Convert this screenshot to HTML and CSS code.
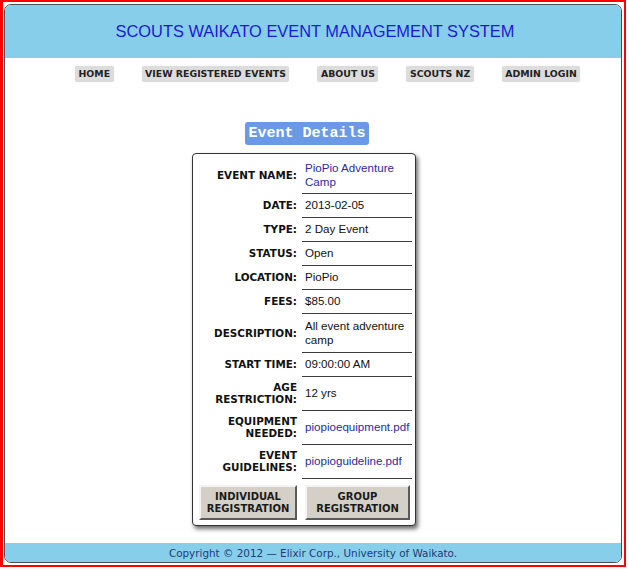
FILE: index.html
```html
<!DOCTYPE html>
<html lang="en">
<head>
<meta charset="utf-8">
<title>Scouts Waikato Event Management System</title>
<link rel="stylesheet" href="styles.css">
</head>
<body>
<div class="frame">
  <div class="site">
    <header class="header">
      <h1 class="title">SCOUTS WAIKATO EVENT MANAGEMENT SYSTEM</h1>
    </header>
    <nav class="nav">
      <a class="nav-btn" href="#">HOME</a>
      <a class="nav-btn" href="#">VIEW REGISTERED EVENTS</a>
      <a class="nav-btn" href="#">ABOUT US</a>
      <a class="nav-btn" href="#">SCOUTS NZ</a>
      <a class="nav-btn" href="#">ADMIN LOGIN</a>
    </nav>
    <main class="main">
      <div class="badge">Event Details</div>
      <div class="card">
        <table class="details">
          <tr><th>EVENT NAME:</th><td class="link">PioPio Adventure Camp</td></tr>
          <tr><th>DATE:</th><td>2013-02-05</td></tr>
          <tr><th>TYPE:</th><td>2 Day Event</td></tr>
          <tr><th>STATUS:</th><td>Open</td></tr>
          <tr><th>LOCATION:</th><td>PioPio</td></tr>
          <tr><th>FEES:</th><td>$85.00</td></tr>
          <tr class="tall"><th>DESCRIPTION:</th><td>All event adventure camp</td></tr>
          <tr><th>START TIME:</th><td>09:00:00 AM</td></tr>
          <tr><th>AGE<br>RESTRICTION:</th><td>12 yrs</td></tr>
          <tr><th>EQUIPMENT<br>NEEDED:</th><td class="link">piopioequipment.pdf</td></tr>
          <tr><th>EVENT<br>GUIDELINES:</th><td class="link">piopioguideline.pdf</td></tr>
        </table>
        <div class="actions">
          <button class="reg-btn reg-individual">INDIVIDUAL<br>REGISTRATION</button>
          <button class="reg-btn reg-group">GROUP<br>REGISTRATION</button>
        </div>
      </div>
    </main>
    <footer class="footer">Copyright © 2012 — Elixir Corp., University of Waikato.</footer>
  </div>
</div>
</body>
</html>
```

FILE: styles.css
```css
html, body {
  margin: 0;
  padding: 0;
  background: #fff;
}

.frame {
  box-sizing: border-box;
  width: 626px;
  height: 567px;
  border: 2px solid #f00;
  border-left-width: 3px;
  padding: 2px 2px 2px 1px;
}

.site {
  box-sizing: border-box;
  height: 100%;
  border: 1px solid #4a4f55;
  border-radius: 7px;
  overflow: hidden;
  display: flex;
  flex-direction: column;
  background: #fff;
}

.header {
  height: 53px;
  background: #87ceeb;
  display: flex;
  align-items: center;
  justify-content: center;
}

.title {
  margin: 0 0 0 4px;
  font-family: "Liberation Sans", Arial, sans-serif;
  font-weight: normal;
  font-size: 16.4px;
  color: #1b1bcc;
}

.nav {
  display: flex;
  gap: 28px;
  padding-left: 70px;
  margin-top: 8px;
}

.nav-btn {
  display: block;
  background: #dcdcdc;
  border-radius: 3px;
  padding: 2px 3.5px;
  font-family: "DejaVu Sans", Verdana, sans-serif;
  font-weight: bold;
  font-size: 9.4px;
  line-height: 12px;
  color: #222;
  text-decoration: none;
  box-shadow: 0 0 1px #cfcfcf;
}

.main {
  flex: 1;
  display: flex;
  flex-direction: column;
  align-items: center;
  padding-right: 16px;
  padding-top: 40px;
}

.badge {
  margin-left: 4px;
  background: #6a9ae6;
  color: #fff;
  font-family: "Liberation Mono", "Courier New", monospace;
  font-weight: bold;
  font-size: 15px;
  line-height: 23px;
  padding: 0 3px;
  border-radius: 3px;
}

.card {
  box-sizing: border-box;
  width: 224px;
  margin-top: 8px;
  margin-right: 2px;
  border: 1px solid #333;
  border-radius: 4px;
  padding: 3px 3px 5px 4px;
  box-shadow: 2px 3px 4px #6a6a6a;
  background: #fff;
}

.details {
  border-collapse: collapse;
  width: 100%;
}

.details th {
  width: 100px;
  padding: 4px 5px 5px 0;
  text-align: right;
  vertical-align: middle;
  font-family: "DejaVu Sans", Verdana, sans-serif;
  font-weight: bold;
  font-size: 10.4px;
  line-height: 12.5px;
  color: #111;
}

.details td {
  padding: 4px 2px 5px 3px;
  vertical-align: middle;
  border-bottom: 1px solid #3a3a3a;
  font-family: "Liberation Sans", Arial, sans-serif;
  font-size: 11.6px;
  line-height: 14px;
  color: #111;
}

.details tr:first-child th,
.details tr:first-child td {
  padding-bottom: 4px;
}

.details tr.tall th,
.details tr.tall td {
  padding-top: 5px;
}

.details td.link {
  color: #2b2ba0;
}

.actions {
  display: flex;
  gap: 8px;
  margin-top: 6px;
  padding-left: 2px;
}

.reg-btn {
  box-sizing: border-box;
  height: 35px;
  background: #d4d0c8;
  border: 2px solid;
  border-color: #f4f4f4 #5a5a5a #5a5a5a #f4f4f4;
  font-family: "DejaVu Sans", Verdana, sans-serif;
  font-weight: bold;
  font-size: 10px;
  line-height: 12px;
  color: #1a1a1a;
  padding: 0;
}

.reg-individual {
  width: 98px;
}

.reg-group {
  width: 105px;
}

.footer {
  height: 19px;
  background: #87ceeb;
  display: flex;
  align-items: center;
  justify-content: center;
  font-family: "DejaVu Sans", Verdana, sans-serif;
  font-size: 10.4px;
  color: #233a78;
}
```
